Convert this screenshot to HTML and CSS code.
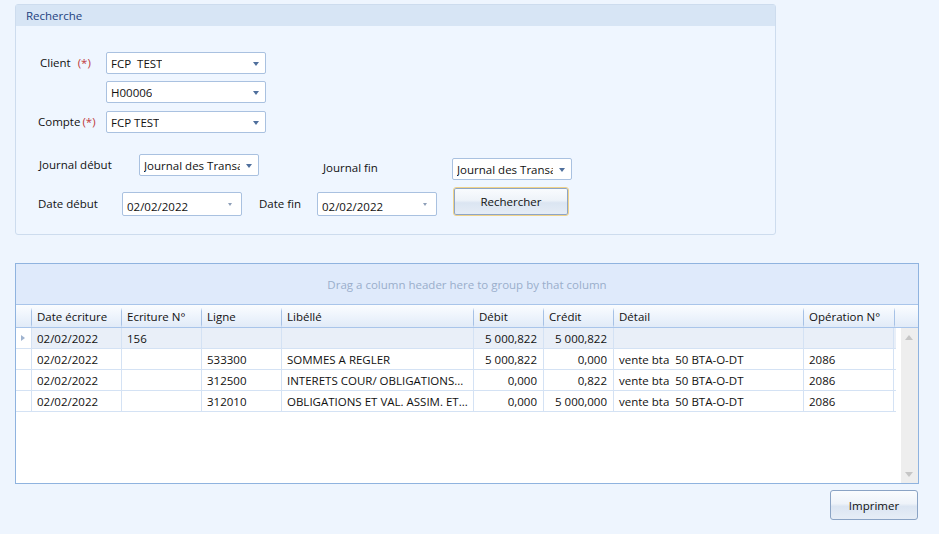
FILE: index.html
```html
<!DOCTYPE html>
<html lang="fr">
<head>
    <meta charset="UTF-8">
    <meta name="viewport" content="width=device-width, initial-scale=1.0">
    <title>Recherche écritures</title>
    <link rel="stylesheet" href="styles.css">
</head>
<body>
    <div class="window">
        <!-- Search criteria -->
        <section class="search-panel">
            <h2 class="panel-title">Recherche</h2>

            <div class="form-row row-client">
                <div class="field-label label-client">Client <span class="required">(*)</span></div>
                <div class="combo combo-wide"><span class="combo-text">FCP  TEST</span><span class="combo-arrow"></span></div>
            </div>
            <div class="form-row row-sub">
                <div class="field-label"></div>
                <div class="combo combo-wide"><span class="combo-text">H00006</span><span class="combo-arrow"></span></div>
            </div>
            <div class="form-row row-compte">
                <div class="field-label label-compte">Compte<span class="required">(*)</span></div>
                <div class="combo combo-wide"><span class="combo-text">FCP TEST</span><span class="combo-arrow"></span></div>
            </div>

            <div class="form-row row-journal">
                <div class="field-label label-journal">Journal début</div>
                <div class="combo combo-journal"><span class="combo-text">Journal des Transa</span><span class="combo-arrow"></span></div>
                <div class="field-label label-journal-fin">Journal fin</div>
                <div class="combo combo-journal combo-low"><span class="combo-text">Journal des Transa</span><span class="combo-arrow"></span></div>
            </div>

            <div class="form-row row-dates">
                <div class="field-label label-date">Date début</div>
                <div class="date-edit"><span class="combo-text">02/02/2022</span><span class="date-arrow"></span></div>
                <div class="field-label label-date-fin">Date fin</div>
                <div class="date-edit"><span class="combo-text">02/02/2022</span><span class="date-arrow"></span></div>
                <button class="btn btn-focused">Rechercher</button>
            </div>
        </section>

        <!-- Results grid -->
        <section class="grid">
            <div class="group-panel">Drag a column header here to group by that column</div>
            <div class="grid-header">
                <div class="hcell indicator"></div>
                <div class="hcell">Date écriture</div>
                <div class="hcell">Ecriture N°</div>
                <div class="hcell">Ligne</div>
                <div class="hcell">Libéllé</div>
                <div class="hcell">Débit</div>
                <div class="hcell">Crédit</div>
                <div class="hcell">Détail</div>
                <div class="hcell">Opération N°</div>
                <div class="hcell filler"></div>
            </div>
            <div class="grid-body">
                <div class="rows">
                    <div class="row row-current">
                        <div class="cell indicator"><span class="row-pointer"></span></div>
                        <div class="cell">02/02/2022</div>
                        <div class="cell">156</div>
                        <div class="cell"></div>
                        <div class="cell"></div>
                        <div class="cell num">5 000,822</div>
                        <div class="cell num">5 000,822</div>
                        <div class="cell"></div>
                        <div class="cell"></div>
                    </div>
                    <div class="row">
                        <div class="cell indicator"></div>
                        <div class="cell">02/02/2022</div>
                        <div class="cell"></div>
                        <div class="cell">533300</div>
                        <div class="cell">SOMMES A REGLER</div>
                        <div class="cell num">5 000,822</div>
                        <div class="cell num">0,000</div>
                        <div class="cell pre">vente bta  50 BTA-O-DT</div>
                        <div class="cell">2086</div>
                    </div>
                    <div class="row">
                        <div class="cell indicator"></div>
                        <div class="cell">02/02/2022</div>
                        <div class="cell"></div>
                        <div class="cell">312500</div>
                        <div class="cell">INTERETS COUR/ OBLIGATIONS...</div>
                        <div class="cell num">0,000</div>
                        <div class="cell num">0,822</div>
                        <div class="cell pre">vente bta  50 BTA-O-DT</div>
                        <div class="cell">2086</div>
                    </div>
                    <div class="row">
                        <div class="cell indicator"></div>
                        <div class="cell">02/02/2022</div>
                        <div class="cell"></div>
                        <div class="cell">312010</div>
                        <div class="cell">OBLIGATIONS ET VAL. ASSIM. ET...</div>
                        <div class="cell num">0,000</div>
                        <div class="cell num">5 000,000</div>
                        <div class="cell pre">vente bta  50 BTA-O-DT</div>
                        <div class="cell">2086</div>
                    </div>
                </div>
                <div class="vscroll">
                    <span class="scroll-up"></span>
                    <span class="scroll-down"></span>
                </div>
            </div>
        </section>

        <div class="actions">
            <button class="btn btn-print">Imprimer</button>
        </div>
    </div>
</body>
</html>
```

FILE: styles.css
```css
/* General Reset */
* {
    margin: 0;
    padding: 0;
    box-sizing: border-box;
}

body {
    font-family: 'Open Sans', 'Noto Sans', sans-serif;
    font-size: 11.5px;
    color: #111;
    background-color: #eef5fe;
    width: 939px;
    height: 534px;
    overflow: hidden;
}

.window {
    padding: 4px 0 0 15px;
}

/* Search Panel */
.search-panel {
    width: 761px;
    height: 231px;
    border: 1px solid #cddcee;
    border-radius: 3px;
    background-color: #eff6ff;
}

.panel-title {
    height: 21px;
    line-height: 21px;
    padding-left: 10px;
    font-size: 11.5px;
    font-weight: normal;
    color: #23427f;
    background-color: #d7e5f5;
}

.form-row {
    display: flex;
    align-items: flex-start;
}

.row-client {
    margin-top: 26px;
}

.row-sub {
    margin-top: 7px;
}

.row-compte {
    margin-top: 8px;
}

.row-journal {
    margin-top: 21px;
}

.row-dates {
    margin-top: 7px;
}

.field-label {
    width: 90px;
    padding-left: 24px;
    height: 22px;
    line-height: 22px;
    white-space: nowrap;
}

.label-compte {
    padding-left: 22px;
}

.label-client .required {
    margin-left: 4px;
}

.label-compte .required {
    margin-left: 2px;
}

.required {
    color: #c0393b;
}

.label-journal {
    width: 123px;
    padding-left: 23px;
}

.label-journal-fin {
    width: 193px;
    padding-left: 64px;
    margin-top: 3px;
}

.label-date {
    width: 106px;
    padding-left: 22px;
    margin-top: 5px;
    height: 24px;
    line-height: 24px;
}

.label-date-fin {
    width: 75px;
    padding-left: 17px;
    margin-top: 5px;
    height: 24px;
    line-height: 24px;
}

/* Combo boxes */
.combo,
.date-edit {
    position: relative;
    display: flex;
    align-items: center;
    height: 22px;
    background-color: #fff;
    border: 1px solid #a9c1e0;
    border-radius: 2px;
    padding: 0 18px 0 4px;
    overflow: hidden;
}

.combo-wide {
    width: 160px;
}

.combo-journal {
    width: 120px;
}

.combo-low {
    margin-top: 4px;
}

.combo-text {
    white-space: pre;
    overflow: hidden;
}

.combo-arrow {
    position: absolute;
    right: 6px;
    top: 9px;
    border-left: 3.5px solid transparent;
    border-right: 3.5px solid transparent;
    border-top: 4px solid #4f6f9c;
}

.date-edit {
    width: 120px;
    height: 24px;
    margin-top: 5px;
    padding-top: 4px;
}

.date-arrow {
    position: absolute;
    right: 9px;
    top: 10px;
    border-left: 2.5px solid transparent;
    border-right: 2.5px solid transparent;
    border-top: 3px solid #8d9fb8;
}

/* Buttons */
.btn {
    font-family: inherit;
    font-size: 11.5px;
    color: #111;
    border: 1px solid #8aa3c4;
    border-radius: 3px;
    background: linear-gradient(#fafcfe 0%, #eef3f9 45%, #dbe5f2 55%, #e6edf6 100%);
    cursor: pointer;
}

.btn-focused {
    width: 116px;
    height: 29px;
    margin-left: 16px;
    border: 1px solid #f0d38a;
    box-shadow: inset 0 0 0 1px #8ea5c6;
}

/* Grid */
.grid {
    width: 904px;
    height: 221px;
    margin-top: 28px;
    border: 1px solid #8fb3df;
    background-color: #fff;
    display: flex;
    flex-direction: column;
}

.group-panel {
    height: 41px;
    line-height: 41px;
    text-align: center;
    color: #9aaecb;
    background-color: #dfeafb;
    border-bottom: 1px solid #a9c5ea;
}

.grid-header,
.row {
    display: grid;
    grid-template-columns: 15px 90px 80px 80px 192px 70px 70px 190px 91px;
}

.grid-header {
    grid-template-columns: 15px 90px 80px 80px 192px 70px 70px 190px 91px 1fr;
    height: 23px;
    background: linear-gradient(#fbfdff 0%, #eef4fc 50%, #e1ebf8 100%);
    border-bottom: 1px solid #a9c5ea;
}

.hcell {
    padding-left: 5px;
    line-height: 23px;
    white-space: nowrap;
    overflow: hidden;
    border-left: 1px solid #b3cbea;
    border-image: linear-gradient(transparent 15%, #a7c2e6 30%, #a7c2e6 85%, transparent) 1;
}

.hcell.indicator {
    border-left: none;
}

.grid-body {
    flex: 1;
    display: flex;
}

.rows {
    flex: 1;
}

.row {
    height: 21px;
    border-bottom: 1px solid #d4e2f4;
}

.row-current {
    background-color: #e9eff8;
}

.cell {
    padding: 0 5px;
    line-height: 21px;
    white-space: nowrap;
    overflow: hidden;
    border-left: 1px solid #d4e2f4;
}

.cell:last-child {
    border-right: 1px solid #d4e2f4;
}

.cell.indicator {
    border-left: none;
    background-color: #fff;
    display: flex;
    align-items: center;
    padding: 0 0 0 5px;
}

.cell.num {
    text-align: right;
    padding-right: 6px;
}

.cell.pre {
    white-space: pre;
}

.row-pointer {
    border-top: 3.5px solid transparent;
    border-bottom: 3.5px solid transparent;
    border-left: 4px solid #9fb3cf;
}

.vscroll {
    position: relative;
    width: 17px;
    margin-left: 5px;
    background-color: #eeeeee;
}

.scroll-up,
.scroll-down {
    position: absolute;
    left: 4px;
    border-left: 4.5px solid transparent;
    border-right: 4.5px solid transparent;
}

.scroll-up {
    top: 7px;
    border-bottom: 5px solid #c6c6c6;
}

.scroll-down {
    bottom: 6px;
    border-top: 5px solid #c6c6c6;
}

/* Footer actions */
.actions {
    width: 903px;
    display: flex;
    justify-content: flex-end;
    margin-top: 6px;
}

.btn-print {
    width: 88px;
    height: 30px;
}
```
